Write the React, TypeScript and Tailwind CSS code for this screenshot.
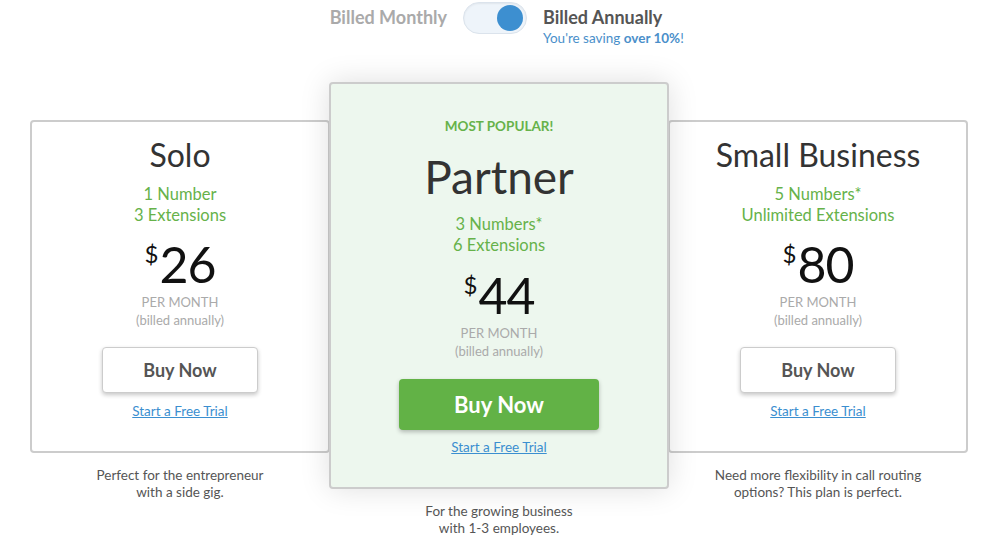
import React from "react";

const font = { fontFamily: "Lato, 'Open Sans', 'Liberation Sans', sans-serif" };

function Price({ value }: { value: string }) {
  return (
    <div className="flex justify-center items-start text-[#111] h-[52px]">
      <span className="text-[24px] leading-[24px] mt-[3px] mr-[1px]">$</span>
      <span className="text-[50px] leading-[50px] tracking-[-1px]">{value}</span>
    </div>
  );
}

function SideCard({
  title,
  lines,
  price,
  desc,
}: {
  title: string;
  lines: string[];
  price: string;
  desc: string[];
}) {
  return (
    <div className="w-[300px] mt-[38px] flex flex-col">
      <div className="h-[333px] bg-white border-2 border-[#cccccc] rounded-[4px] flex flex-col items-center pt-[14px]">
        <div className="text-[32px] leading-[38px] text-[#333]">{title}</div>
        <div className="mt-[10px] text-[16.5px] leading-[21px] text-[#66b24a] text-center">
          {lines.map((l) => (
            <div key={l}>{l}</div>
          ))}
        </div>
        <div className="mt-[13px]">
          <Price value={price} />
        </div>
        <div className="mt-[2px] text-[13px] leading-[18px] text-[#aaaaaa] text-center">
          <div>PER MONTH</div>
          <div>(billed annually)</div>
        </div>
        <button className="mt-[18px] w-[156px] h-[46px] bg-white border border-[#cccccc] rounded-[4px] shadow-[0_2px_4px_rgba(0,0,0,0.22)] text-[18px] font-bold text-[#555]">
          Buy Now
        </button>
        <a className="mt-[10px] text-[13.5px] leading-[17px] text-[#3b8fd0] underline">Start a Free Trial</a>
      </div>
      <div className="mt-[14px] text-[13.5px] leading-[17px] text-[#555] text-center">
        {desc.map((d) => (
          <div key={d}>{d}</div>
        ))}
      </div>
    </div>
  );
}

export default function App() {
  return (
    <div className="w-[986px] h-[544px] bg-white overflow-hidden" style={font}>
      <div className="grid grid-cols-[1fr_auto_1fr] items-start pt-[2px] h-[82px]">
        <div className="flex justify-end pr-[12px] pt-[4px]">
          <span className="text-[18px] leading-[23px] font-bold text-[#aaaaaa]">Billed Monthly</span>
        </div>
        <div className="relative w-[64px] h-[32px] rounded-full bg-[#eef4fa] border border-[#dbe3ec] shadow-[inset_0_1px_2px_rgba(0,0,0,0.06)] ml-[4px]">
          <div className="absolute right-[3px] top-[2px] w-[26px] h-[26px] rounded-full bg-[#3d8fd0]" />
        </div>
        <div className="pl-[16px] pt-[4px] flex flex-col">
          <span className="text-[18px] leading-[23px] font-bold text-[#555]">Billed Annually</span>
          <span className="text-[13.5px] leading-[17px] text-[#4a8fca] mt-[1px]">
            You're saving <b>over 10%</b>!
          </span>
        </div>
      </div>

      <div className="flex items-start ml-[30px]">
        <SideCard
          title="Solo"
          lines={["1 Number", "3 Extensions"]}
          price="26"
          desc={["Perfect for the entrepreneur", "with a side gig."]}
        />

        <div className="w-[340px] -mx-px relative z-10 flex flex-col">
          <div className="h-[407px] bg-[#edf7ee] border-2 border-[#cccccc] rounded-[4px] shadow-[0_0_30px_rgba(0,0,0,0.13)] flex flex-col items-center pt-[33px]">
            <div className="text-[13.5px] leading-[18px] font-bold text-[#66b24a]">MOST POPULAR!</div>
            <div className="mt-[15px] text-[46px] leading-[54px] text-[#333]">Partner</div>
            <div className="mt-[10px] text-[16.5px] leading-[21px] text-[#66b24a] text-center">
              <div>3 Numbers*</div>
              <div>6 Extensions</div>
            </div>
            <div className="mt-[14px]">
              <Price value="44" />
            </div>
            <div className="mt-[2px] text-[13px] leading-[18px] text-[#aaaaaa] text-center">
              <div>PER MONTH</div>
              <div>(billed annually)</div>
            </div>
            <button className="mt-[19px] w-[200px] h-[51px] bg-[#62b246] rounded-[4px] shadow-[0_2px_4px_rgba(0,0,0,0.25)] text-[22px] font-bold text-white">
              Buy Now
            </button>
            <a className="mt-[9px] text-[13.5px] leading-[17px] text-[#3b8fd0] underline">Start a Free Trial</a>
          </div>
          <div className="mt-[14px] text-[13.5px] leading-[17px] text-[#555] text-center">
            <div>For the growing business</div>
            <div>with 1-3 employees.</div>
          </div>
        </div>

        <SideCard
          title="Small Business"
          lines={["5 Numbers*", "Unlimited Extensions"]}
          price="80"
          desc={["Need more flexibility in call routing", "options? This plan is perfect."]}
        />
      </div>
    </div>
  );
}
